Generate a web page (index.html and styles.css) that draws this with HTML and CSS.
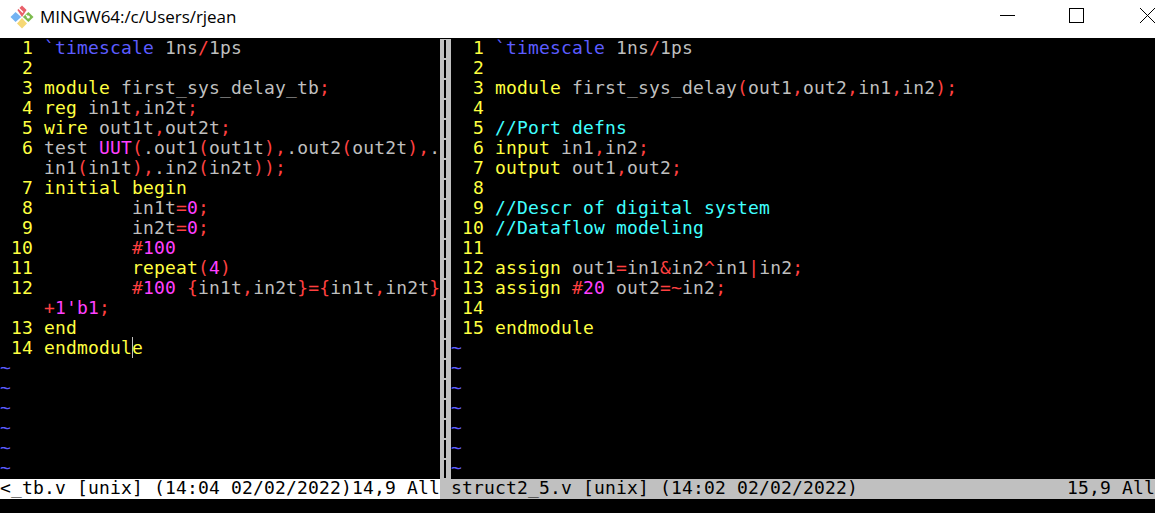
FILE: index.html
```html
<!DOCTYPE html>
<html lang="en">
<head>
<meta charset="utf-8">
<title>MINGW64:/c/Users/rjean</title>
<link rel="stylesheet" href="styles.css">
</head>
<body>
<header class="titlebar">
  <svg class="app-icon" width="24" height="24" viewBox="0 0 24 24">
    <path class="q-red" d="M12 0.5 L16.6 5.1 L12 12 L7.4 5.1 Z"/>
    <path class="q-green" d="M23.5 12 L18.4 17 L12.8 12 L18.4 7 Z"/>
    <path class="q-yellow" d="M12 23.5 L7 18.6 L12 13 L17 18.6 Z"/>
    <path class="q-blue" d="M0.5 12 L5.6 7 L11.2 12 L5.6 17 Z"/>
    <path class="q-line" d="M8.5 3 L13 7.5 M16 10 L18.5 12.5"/>
    <circle class="q-dot" cx="18.3" cy="12" r="1.6"/>
  </svg>
  <span class="title">MINGW64:/c/Users/rjean</span>
  <div class="controls">
    <svg class="ctl-min" width="15" height="15" viewBox="0 0 15 15"><path d="M0 7.5H15"/></svg>
    <svg class="ctl-max" width="15" height="15" viewBox="0 0 15 15"><path d="M0.5 0.5H14.5V14.5H0.5Z"/></svg>
    <svg class="ctl-close" width="15" height="15" viewBox="0 0 15 15"><path d="M0 0L15 15M15 0L0 15"/></svg>
  </div>
</header>
<main class="terminal">
  <div class="panes">
    <section class="pane pane-left">
<div class="row"><span class="n">  1 </span><span class="b">`timescale</span> 1ns<span class="r">/</span>1ps</div>
<div class="row"><span class="n">  2 </span></div>
<div class="row"><span class="n">  3 </span><span class="y">module</span> first_sys_delay_tb<span class="r">;</span></div>
<div class="row"><span class="n">  4 </span><span class="y">reg</span> in1t<span class="r">,</span>in2t<span class="r">;</span></div>
<div class="row"><span class="n">  5 </span><span class="y">wire</span> out1t<span class="r">,</span>out2t<span class="r">;</span></div>
<div class="row"><span class="n">  6 </span>test <span class="m">UUT</span><span class="r">(</span>.out1<span class="r">(</span>out1t<span class="r">),</span>.out2<span class="r">(</span>out2t<span class="r">),</span>.</div>
<div class="row">    in1<span class="r">(</span>in1t<span class="r">),</span>.in2<span class="r">(</span>in2t<span class="r">));</span></div>
<div class="row"><span class="n">  7 </span><span class="y">initial begin</span></div>
<div class="row"><span class="n">  8 </span>        in1t<span class="r">=</span><span class="m">0</span><span class="r">;</span></div>
<div class="row"><span class="n">  9 </span>        in2t<span class="r">=</span><span class="m">0</span><span class="r">;</span></div>
<div class="row"><span class="n"> 10 </span>        <span class="r">#</span><span class="m">100</span></div>
<div class="row"><span class="n"> 11 </span>        <span class="y">repeat</span><span class="r">(</span><span class="m">4</span><span class="r">)</span></div>
<div class="row"><span class="n"> 12 </span>        <span class="r">#</span><span class="m">100</span> <span class="r">{</span>in1t<span class="r">,</span>in2t<span class="r">}={</span>in1t<span class="r">,</span>in2t<span class="r">}</span></div>
<div class="row">    <span class="r">+</span><span class="m">1'b1</span><span class="r">;</span></div>
<div class="row"><span class="n"> 13 </span><span class="y">end</span></div>
<div class="row"><span class="n"> 14 </span><span class="y">endmodul</span><span class="y cursor">e</span></div>
<div class="row b">~</div>
<div class="row b">~</div>
<div class="row b">~</div>
<div class="row b">~</div>
<div class="row b">~</div>
<div class="row b">~</div>
    </section>
    <div class="divider"></div>
    <section class="pane pane-right">
<div class="row"><span class="n">  1 </span><span class="b">`timescale</span> 1ns<span class="r">/</span>1ps</div>
<div class="row"><span class="n">  2 </span></div>
<div class="row"><span class="n">  3 </span><span class="y">module</span> first_sys_delay<span class="r">(</span>out1<span class="r">,</span>out2<span class="r">,</span>in1<span class="r">,</span>in2<span class="r">);</span></div>
<div class="row"><span class="n">  4 </span></div>
<div class="row"><span class="n">  5 </span><span class="c">//Port defns</span></div>
<div class="row"><span class="n">  6 </span><span class="y">input</span> in1<span class="r">,</span>in2<span class="r">;</span></div>
<div class="row"><span class="n">  7 </span><span class="y">output</span> out1<span class="r">,</span>out2<span class="r">;</span></div>
<div class="row"><span class="n">  8 </span></div>
<div class="row"><span class="n">  9 </span><span class="c">//Descr of digital system</span></div>
<div class="row"><span class="n"> 10 </span><span class="c">//Dataflow modeling</span></div>
<div class="row"><span class="n"> 11 </span></div>
<div class="row"><span class="n"> 12 </span><span class="y">assign</span> out1<span class="r">=</span>in1<span class="r">&amp;</span>in2<span class="r">^</span>in1<span class="r">|</span>in2<span class="r">;</span></div>
<div class="row"><span class="n"> 13 </span><span class="y">assign</span> <span class="r">#</span><span class="m">20</span> out2<span class="r">=~</span>in2<span class="r">;</span></div>
<div class="row"><span class="n"> 14 </span></div>
<div class="row"><span class="n"> 15 </span><span class="y">endmodule</span></div>
<div class="row b">~</div>
<div class="row b">~</div>
<div class="row b">~</div>
<div class="row b">~</div>
<div class="row b">~</div>
<div class="row b">~</div>
<div class="row b">~</div>
    </section>
  </div>
  <div class="statusline">
    <div class="status status-active">&lt;_tb.v [unix] (14:04 02/02/2022)14,9 All</div>
    <div class="status status-inactive"><span>struct2_5.v [unix] (14:02 02/02/2022)</span><span>15,9 All</span></div>
  </div>
</main>
</body>
</html>
```
FILE: styles.css
```css
* { box-sizing: border-box; }
html, body { margin: 0; height: 100%; overflow: hidden; background: #000; }
body { display: flex; flex-direction: column; width: 1155px; height: 513px; }

.titlebar {
  height: 38px;
  flex: none;
  display: flex;
  align-items: center;
  background: #fff;
  padding-left: 10px;
  color: #000;
}
.app-icon { flex: none; margin-right: 6px; margin-bottom: 5px; }
.q-red { fill: #e9606a; }
.q-green { fill: #7dbb4e; }
.q-yellow { fill: #f6d874; }
.q-blue { fill: #74b3f2; }
.q-line { stroke: #fff; stroke-width: 1.4; fill: none; }
.q-dot { fill: #fff; }
.title {
  font: 400 17px/20px "Open Sans", sans-serif;
  margin-bottom: 4px;
  letter-spacing: -0.05px;
}
.controls { margin-left: auto; display: flex; align-items: center; margin-bottom: 8px; }
.controls svg { display: block; fill: none; stroke: #000; stroke-width: 1; }
.ctl-max { margin-left: 54px; }
.ctl-close { margin-left: 56px; }
.ctl-min { shape-rendering: crispEdges; }
.ctl-max { shape-rendering: crispEdges; }

.terminal {
  flex: 1;
  padding-top: 1px;
  background: #000;
  color: #bfbfbf;
  font: 400 18px/18px "DejaVu Sans Mono", monospace;
  letter-spacing: 0.164px;
}
.panes { display: flex; height: 440px; }
.pane-left { width: 440px; flex: none; }
.pane-right { flex: 1; }
.row { height: 20px; white-space: pre; }
.divider {
  width: 11px;
  flex: none;
  background-color: #c0c0c0;
  background-image: repeating-linear-gradient(#c0c0c0 0 1px, #000 1px 19px, #c0c0c0 19px 20px);
  background-size: 2px 100%;
  background-position: 4px 0;
  background-repeat: no-repeat;
}

.n { color: #ffff40; }
.y { color: #ffff40; }
.b { color: #5c5cff; }
.r { color: #ff4040; }
.m { color: #ff40ff; }
.c { color: #40ffff; }
.cursor { box-shadow: inset 1px 0 0 #bfbfbf; }

.statusline { display: flex; height: 20px; color: #000; background: #c0c0c0; }
.status { height: 20px; white-space: pre; }
.status-active { width: 440px; flex: none; background: #fff; }
.status-inactive {
  flex: 1;
  margin-left: 11px;
  display: flex;
  justify-content: space-between;
}
```
